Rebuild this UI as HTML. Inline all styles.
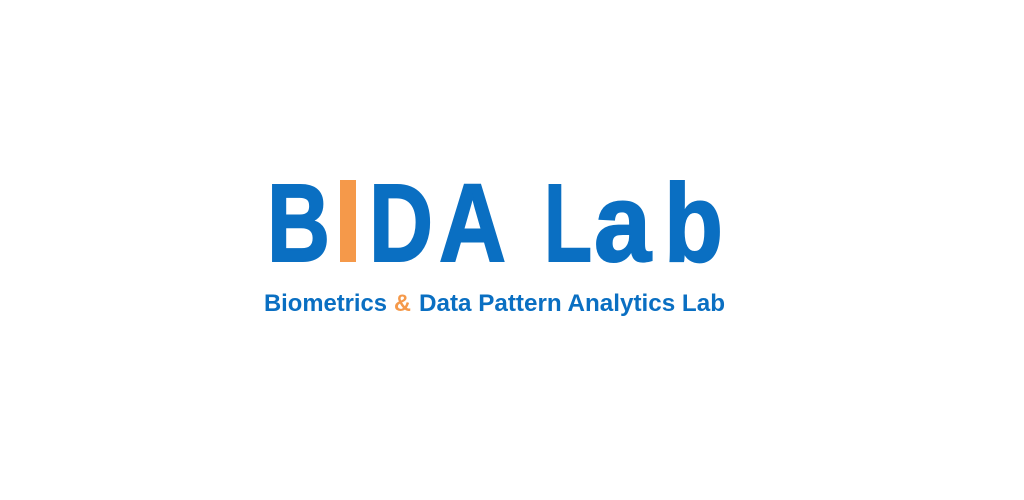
<!DOCTYPE html>
<html><head><meta charset="utf-8"><style>html,body{margin:0;padding:0;background:#fff;width:1024px;height:500px;overflow:hidden}</style></head>
<body>
<svg width="1024" height="500" xmlns="http://www.w3.org/2000/svg" style="display:block">
<g font-family="Liberation Sans, sans-serif" font-weight="bold" font-size="110" fill="#0a6fc2" stroke="#0a6fc2" stroke-width="2">
<text x="267" y="261" textLength="63" lengthAdjust="spacingAndGlyphs">B</text>
<text x="369" y="261" textLength="64" lengthAdjust="spacingAndGlyphs">D</text>
<text x="439" y="261" textLength="67" lengthAdjust="spacingAndGlyphs">A</text>
<text x="544" y="261" textLength="48" lengthAdjust="spacingAndGlyphs">L</text>
<text x="594" y="261" textLength="57" lengthAdjust="spacingAndGlyphs">a</text>
<text x="664" y="261" textLength="59" lengthAdjust="spacingAndGlyphs">b</text>
</g>
<rect x="340" y="180" width="16" height="82" fill="#f5994a"/>
<g font-family="Liberation Sans, sans-serif" font-weight="bold" font-size="24" fill="#0a6fc2">
<text x="264" y="311" textLength="123" lengthAdjust="spacingAndGlyphs">Biometrics</text>
<text x="394" y="311" textLength="17" lengthAdjust="spacingAndGlyphs" fill="#f5994a">&amp;</text>
<text x="419" y="311" textLength="306" lengthAdjust="spacingAndGlyphs">Data Pattern Analytics Lab</text>
</g>
</svg>
</body></html>
